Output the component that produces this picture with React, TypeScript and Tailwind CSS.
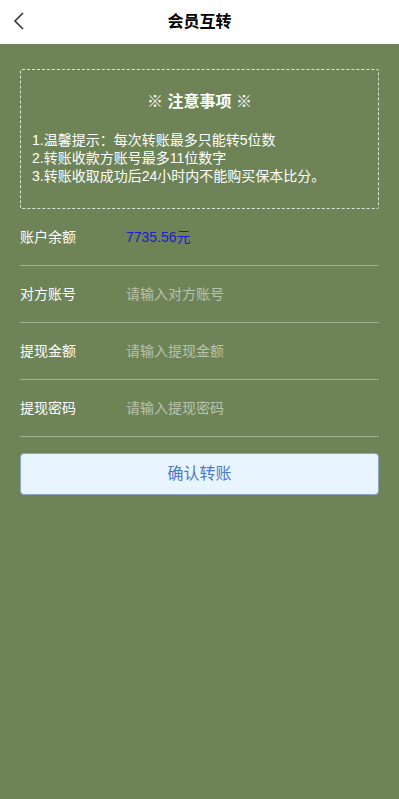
import React from "react";

const font = { fontFamily: '"Liberation Sans", "Noto Sans CJK SC", sans-serif' };

function Row({ label, children }: { label: string; children: React.ReactNode }) {
  return (
    <div className="flex items-center h-[57px] border-b border-[#a3b191]">
      <span className="w-[106px] shrink-0 text-[14px] text-white">{label}</span>
      {children}
    </div>
  );
}

export default function App() {
  return (
    <div className="min-h-[799px] bg-[#6e8456]" style={font}>
      <header className="relative h-[44px] bg-white flex items-center justify-center">
        <svg className="absolute left-[12px] top-[11px]" width="14" height="20" viewBox="0 0 14 20" fill="none">
          <path d="M11 2 L3 10 L11 18" stroke="#333" strokeWidth="1.6" />
        </svg>
        <h1 className="text-[16px] font-bold text-black">会员互转</h1>
      </header>

      <main className="px-[20px] pt-[25px]">
        <div className="border border-dashed border-[#dfe5d6] rounded-[2px] px-[11px] pt-[20px] pb-[23px] text-white">
          <h2 className="text-center text-[16px] font-bold leading-[24px] mb-[17px]">※ 注意事项 ※</h2>
          <p className="text-[14px] leading-[18px]">1.温馨提示：每次转账最多只能转5位数</p>
          <p className="text-[14px] leading-[18px]">2.转账收款方账号最多11位数字</p>
          <p className="text-[14px] leading-[18px]">3.转账收取成功后24小时内不能购买保本比分。</p>
        </div>

        <div>
          <Row label="账户余额">
            <span className="text-[14px] text-[#1b1bd0]">7735.56元</span>
          </Row>
          <Row label="对方账号">
            <input
              className="flex-1 bg-transparent outline-none text-[14px] text-white placeholder:text-[#b9c2ad]"
              placeholder="请输入对方账号"
            />
          </Row>
          <Row label="提现金额">
            <input
              className="flex-1 bg-transparent outline-none text-[14px] text-white placeholder:text-[#b9c2ad]"
              placeholder="请输入提现金额"
            />
          </Row>
          <Row label="提现密码">
            <input
              type="password"
              className="flex-1 bg-transparent outline-none text-[14px] text-white placeholder:text-[#b9c2ad]"
              placeholder="请输入提现密码"
            />
          </Row>
        </div>

        <button className="mt-[16px] w-full h-[42px] rounded-[4px] bg-[#e8f4ff] border border-[#8ea6c6] text-[16px] text-[#4a78cf]">
          确认转账
        </button>
      </main>
    </div>
  );
}
